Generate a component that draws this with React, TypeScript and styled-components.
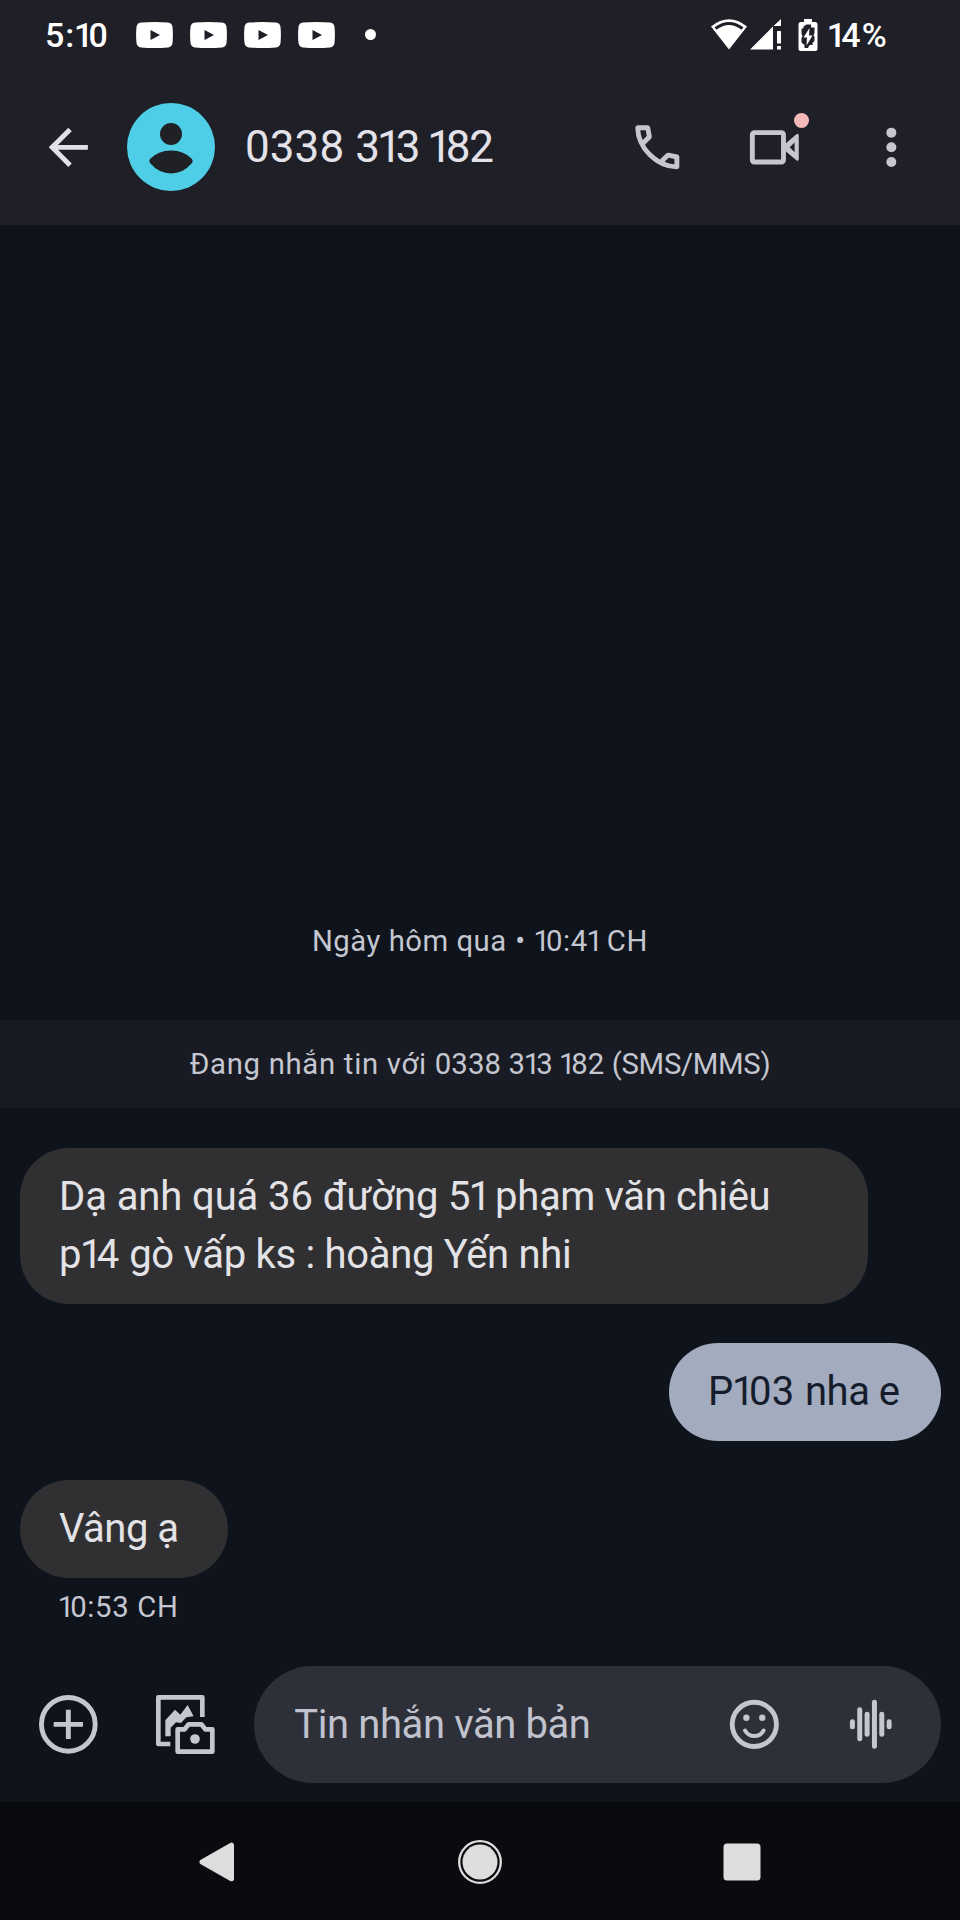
import React from 'react';
import styled, { createGlobalStyle } from 'styled-components';

const GlobalStyle = createGlobalStyle`
  *, *::before, *::after { box-sizing: border-box; }
  body { margin: 0; background: #0f131c; }
`;

const Screen = styled.div`
  width: 960px;
  height: 1920px;
  display: flex;
  flex-direction: column;
  overflow: hidden;
  background: #0f131c;
  font-family: Roboto, 'Noto Sans', sans-serif;
  color: #e3e2e9;
`;

const Header = styled.header`
  height: 225px;
  background: #1f1f28;
`;

const StatusBar = styled.div`
  height: 69px;
  padding: 0 69px 0 45px;
  display: flex;
  align-items: center;
  justify-content: space-between;
  color: #fff;
`;

const StatusGroup = styled.div`
  display: flex;
  align-items: center;
`;

const StatusText = styled.span<{ $width: number; $spacing: number; $ml?: number }>`
  width: ${(p) => p.$width}px;
  margin-left: ${(p) => p.$ml ?? 0}px;
  font-size: 34px;
  line-height: 40px;
  font-weight: 500;
  letter-spacing: ${(p) => p.$spacing}px;
  white-space: nowrap;
`;

const Notifications = styled.div`
  display: flex;
  align-items: center;
  gap: 17.1px;
`;

const MoreDot = styled.span`
  width: 11px;
  height: 11px;
  margin-left: 29.500px;
  border-radius: 50%;
  background: #fff;
`;

const Glyph = styled.svg<{ $w?: number; $h?: number; $ml?: number }>`
  display: block;
  flex: none;
  width: ${(p) => p.$w ?? 58.67}px;
  height: ${(p) => p.$h ?? p.$w ?? 58.67}px;
  margin-left: ${(p) => p.$ml ?? 0}px;
`;

const AppBar = styled.div`
  height: 156px;
  padding: 0 39px;
  display: flex;
  align-items: center;
`;

const IconButton = styled.button<{ $ml?: number; $color?: string }>`
  position: relative;
  flex: none;
  width: 58.67px;
  height: 58.67px;
  margin: 0 0 0 ${(p) => p.$ml ?? 0}px;
  padding: 0;
  border: 0;
  background: none;
  color: ${(p) => p.$color ?? '#c5c6d0'};
`;

const Badge = styled.span`
  position: absolute;
  left: 48.5px;
  top: -5px;
  width: 15.5px;
  height: 15.5px;
  border-radius: 50%;
  background: #f5b9b7;
`;

const Avatar = styled.div`
  flex: none;
  width: 88px;
  height: 88px;
  margin-left: 29.3px;
  border-radius: 50%;
  background: #4fcfe7;
  color: #1f2126;
`;

const ContactName = styled.h1`
  flex: 1;
  margin: 0 0 0 30px;
  font-size: 44px;
  line-height: 52px;
  font-weight: 400;
  white-space: nowrap;
`;

const Thread = styled.main`
  flex: 1;
  display: flex;
  flex-direction: column;
  justify-content: flex-end;
  padding-bottom: 39px;
`;

const Caption = styled.div`
  font-size: 29.3px;
  line-height: 40px;
  color: #c4c6d0;
  text-align: center;
  white-space: nowrap;
`;

const NoticeBand = styled.div`
  height: 88px;
  margin: 59.5px 0 39.5px;
  padding-bottom: 1px;
  display: flex;
  align-items: center;
  justify-content: center;
  background: #181b23;
`;

const Messages = styled.div`
  display: flex;
  flex-direction: column;
  gap: 39px;
  padding: 0 19.5px;
`;

const Bubble = styled.div<{ $sent?: boolean; $width: number }>`
  align-self: ${(p) => (p.$sent ? 'flex-end' : 'flex-start')};
  width: ${(p) => p.$width}px;
  padding: 20px 0 19px ${(p) => (p.$sent ? 39 : 39.5)}px;
  border-radius: 48.9px;
  background: ${(p) => (p.$sent ? '#a3abbf' : '#303032')};
  color: ${(p) => (p.$sent ? '#151c2b' : '#e3e2e6')};
`;

const Line = styled.div`
  font-size: 40px;
  line-height: 58.75px;
  white-space: nowrap;
`;

const Run = styled.span<{ $spacing: number }>`
  letter-spacing: ${(p) => p.$spacing}px;
`;

const One = styled.span`
  margin-left: -0.04em;
  letter-spacing: -0.14em;
`;

const Stamp = styled(Caption)`
  padding: 9.5px 0 0 59px;
  text-align: left;
`;

const Composer = styled.div`
  height: 136px;
  padding: 0 19.5px 0 39px;
  display: flex;
  align-items: flex-start;
`;

const ComposerActions = styled.div`
  height: 117px;
  display: flex;
  align-items: center;
  gap: 58.7px;
`;

const InputPill = styled.div`
  flex: 1;
  height: 117px;
  margin-left: 39.3px;
  padding: 0 40px;
  display: flex;
  align-items: center;
  border-radius: 58.5px;
  background: #2e3039;
`;

const Placeholder = styled.span`
  flex: 1;
  font-size: 40px;
  line-height: 58px;
  letter-spacing: -0.4px;
  color: #c0c2cd;
  white-space: nowrap;
`;

const NavBar = styled.nav`
  height: 118px;
  padding: 1px 189px 0;
  display: flex;
  align-items: center;
  justify-content: space-between;
  background: #0a0b0e;
  color: #dcdedd;
`;

/** Sets the digit 1 on a narrow, proportional width. */
const Text = ({ children, spacing = 0 }: { children: string; spacing?: number }) => (
  <Run $spacing={spacing}>
    {children.split(/(1)/).map((part, i) => (part === '1' ? <One key={i}>1</One> : part))}
  </Run>
);

const YouTube = () => (
  <Glyph $w={37} $h={26} viewBox="0 0 37 26">
    <path
      fill="currentColor"
      fillRule="evenodd"
      d="M5 .6Q18.500-.4 32 .6Q36 1 36.500 5Q37.300 13 36.500 21Q36 25 32 25.400Q18.500 26.500 5 25.400Q1 25 .5 21Q-.3 13 .5 5Q1 1 5 .6ZM14.500 8V18L24 13Z"
    />
  </Glyph>
);

const bars = [10, 34, 25, 49, 25, 10];

export default function App() {
  return (
    <>
      <GlobalStyle />
      <Screen>
        <Header>
          <StatusBar>
            <StatusGroup>
              <StatusText $width={91} $spacing={0}>
                <Text spacing={1}>5:10</Text>
              </StatusText>
              <Notifications>
                <YouTube />
                <YouTube />
                <YouTube />
                <YouTube />
              </Notifications>
              <MoreDot />
            </StatusGroup>
            <StatusGroup>
              <Glyph $w={36} $h={31} viewBox="0 0 36 31">
                <path fill="currentColor" d="M0 7.500Q18-7 36 7.500L18 30.500Z" />
                <path fill="none" stroke="#1f1f28" strokeWidth="3" d="M4.500 9.500Q18-.5 31.500 9.500" />
              </Glyph>
              <Glyph $w={32} $h={31} $ml={3} viewBox="0 0 32 31">
                <path fill="currentColor" d="M0 30.500L23 7.500V30.500ZM23.500 7L31 0V7ZM27 12h4v12.500h-4zM27 27h4v3.500h-4z" />
              </Glyph>
              <Glyph $w={20} $h={32} $ml={16} viewBox="0 0 20 32">
                <path fill="currentColor" d="M6 0h8v3h3q2.500 0 2.500 2.500V29.500Q19.500 32 17 32H3Q.5 32 .5 29.500V5.500Q.5 3 3 3H6Z" />
                <path
                  fill="#1f1f28"
                  d="M8.500 5.500h4.500v3h3.500v5.500l-1 2 1 2v4l-2 2v2h-3l-1.500 3H6.500v-3L3.500 23.500V19l1-2-1-2.500V10l2-1V7.500z"
                />
                <path fill="currentColor" d="M11.500 9L5.500 18.500H9L8.500 26.500L14.500 16.500H11Z" />
              </Glyph>
              <StatusText $width={63} $spacing={0} $ml={10.5}>
                <Text spacing={1.2}>14%</Text>
              </StatusText>
            </StatusGroup>
          </StatusBar>
          <AppBar>
            <IconButton $color="#e1e0ea" aria-label="Quay lại">
              <Glyph viewBox="0 0 24 24">
                <path fill="none" stroke="currentColor" strokeWidth="2" d="M20 12H5.400M12.700 4.700L5.400 12L12.700 19.300" />
              </Glyph>
            </IconButton>
            <Avatar>
              <Glyph $w={88} viewBox="0 0 88 88">
                <circle cx="44" cy="31" r="11" fill="currentColor" />
                <path
                  fill="currentColor"
                  d="M23 56Q31 47.500 44 47.500T65 56Q66.500 58 65 60Q56 70.500 44 70.500T23 60Q21.500 58 23 56Z"
                />
              </Glyph>
            </Avatar>
            <ContactName>
              <Text spacing={0.1}>0338 </Text>
              <Text spacing={-1.2}>313 182</Text>
            </ContactName>
            <IconButton aria-label="Gọi">
              <Glyph viewBox="0 0 24 24">
                <path
                  fill="currentColor"
                  d="M19.95 21q-3.125 0-6.175-1.362t-5.55-3.863-3.862-5.55T3 4.050q0-.45.3-.75t.75-.3H8.100q.35 0 .625.238t.325.562l.65 3.500q.05.4-.025.675T9.400 8.450L6.975 10.900q.5.925 1.187 1.787t1.513 1.663q.775.775 1.625 1.438T13.100 17l2.350-2.350q.225-.225.588-.337t.712-.063l3.450.7q.35.1.575.363T21 15.900v4.050q0 .45-.3.750t-.75.3M6.025 9l1.650-1.650L7.250 5H5.025q.125 1.025.35 2.025T6.025 9m8.950 8.950q.975.425 1.988.675T19 18.950v-2.200l-2.350-.475z"
                />
              </Glyph>
            </IconButton>
            <IconButton $ml={58.7} aria-label="Gọi video">
              <Glyph viewBox="0 0 24 24">
                <rect x="3" y="6" width="12.750" height="12" rx=".8" fill="none" stroke="currentColor" strokeWidth="2" />
                <path
                  fill="currentColor"
                  fillRule="evenodd"
                  d="M16.500 10.500L21 6.700Q22 6.100 22 7.200V16.800Q22 17.900 21 17.300L16.500 13.500ZM18.300 12L20.300 14V10Z"
                />
              </Glyph>
              <Badge />
            </IconButton>
            <IconButton $ml={58.7} aria-label="Thêm">
              <Glyph viewBox="0 0 24 24">
                <g fill="currentColor">
                  <circle cx="12" cy="6" r="2.050" />
                  <circle cx="12" cy="12" r="2.050" />
                  <circle cx="12" cy="18" r="2.050" />
                </g>
              </Glyph>
            </IconButton>
          </AppBar>
        </Header>

        <Thread>
          <Caption>
            <Text spacing={0.5}>Ngày hôm qua</Text>
            <Text spacing={1.2}> • </Text>
            <Text spacing={0.6}>10:41 CH</Text>
          </Caption>
          <NoticeBand>
            <Caption>
              <Text spacing={0.7}>Đang nhắn tin với </Text>
              <Text spacing={0.1}>0338 313 182 </Text>
              <Text spacing={-0.3}>(SMS/MMS)</Text>
            </Caption>
          </NoticeBand>
          <Messages>
            <Bubble $width={848}>
              <Line>
                <Text spacing={-0.1}>Dạ anh quá 36 đường </Text>
                <Text spacing={-0.35}>51 phạm văn chiêu</Text>
              </Line>
              <Line>
                <Text>p14 </Text>
                <Text spacing={-0.3}>gò vấp ks : hoàng Yến nhi</Text>
              </Line>
            </Bubble>
            <Bubble $sent $width={271.5}>
              <Line>
                <Text spacing={0.4}>P103 </Text>
                <Text spacing={-0.5}>nha e</Text>
              </Line>
            </Bubble>
            <Bubble $width={208}>
              <Line>
                <Text spacing={-0.5}>Vâng ạ</Text>
              </Line>
            </Bubble>
          </Messages>
          <Stamp>
            <Text spacing={0.65}>10:53 CH</Text>
          </Stamp>
        </Thread>

        <Composer>
          <ComposerActions>
            <IconButton aria-label="Đính kèm">
              <Glyph viewBox="0 0 24 24">
                <circle cx="12" cy="12" r="11" fill="none" stroke="currentColor" strokeWidth="2" />
                <path stroke="currentColor" strokeWidth="2" d="M12 6v12M6 12h12" />
              </Glyph>
            </IconButton>
            <IconButton aria-label="Ảnh">
              <Glyph viewBox="0 0 176 176">
                <g fill="none" stroke="currentColor" strokeWidth="14" strokeLinejoin="round">
                  <path d="M139 66V7H7V147H43" />
                  <path d="M65 103H86L98 88H136L148 103H169V170H65Z" />
                </g>
                <path
                  fill="currentColor"
                  d="M28 124V76L57 44L73 59L95 30L113 64L91 67L75 84L60 82L44 98V124Z"
                />
                <circle cx="117" cy="132" r="14.500" fill="currentColor" />
              </Glyph>
            </IconButton>
          </ComposerActions>
          <InputPill>
            <Placeholder>Tin nhắn văn bản</Placeholder>
            <IconButton aria-label="Biểu tượng cảm xúc">
              <Glyph viewBox="0 0 24 24">
                <circle cx="12" cy="12" r="9.050" fill="none" stroke="currentColor" strokeWidth="2" />
                <circle cx="8.750" cy="9.300" r="1.300" fill="currentColor" />
                <circle cx="15.250" cy="9.300" r="1.300" fill="currentColor" />
                <path
                  fill="none"
                  stroke="currentColor"
                  strokeWidth="1.600"
                  strokeLinecap="round"
                  d="M8.200 14.500Q9.500 16.800 12 16.800T15.800 14.500"
                />
              </Glyph>
            </IconButton>
            <IconButton $ml={58.7} aria-label="Ghi âm">
              <Glyph viewBox="0 0 58.670 58.670">
                {bars.map((h, i) => (
                  <rect
                    key={i}
                    x={10.4 - 2.5 + i * 7.35}
                    y={29.3 - h / 2}
                    width="5"
                    height={h}
                    rx="2.400"
                    fill="currentColor"
                  />
                ))}
              </Glyph>
            </IconButton>
          </InputPill>
        </Composer>

        <NavBar>
          <Glyph $w={58} viewBox="0 0 58 58">
            <path
              fill="currentColor"
              stroke="currentColor"
              strokeWidth="5"
              strokeLinejoin="round"
              d="M13 29L42.500 12.200V45.800Z"
            />
          </Glyph>
          <Glyph $w={58} viewBox="0 0 58 58">
            <circle cx="29" cy="29" r="20.800" fill="none" stroke="currentColor" strokeWidth="2.300" />
            <circle cx="29" cy="29" r="17.500" fill="currentColor" />
          </Glyph>
          <Glyph $w={58} viewBox="0 0 58 58">
            <rect x="10.500" y="10.500" width="37" height="37" rx="3.500" fill="currentColor" />
          </Glyph>
        </NavBar>
      </Screen>
    </>
  );
}
